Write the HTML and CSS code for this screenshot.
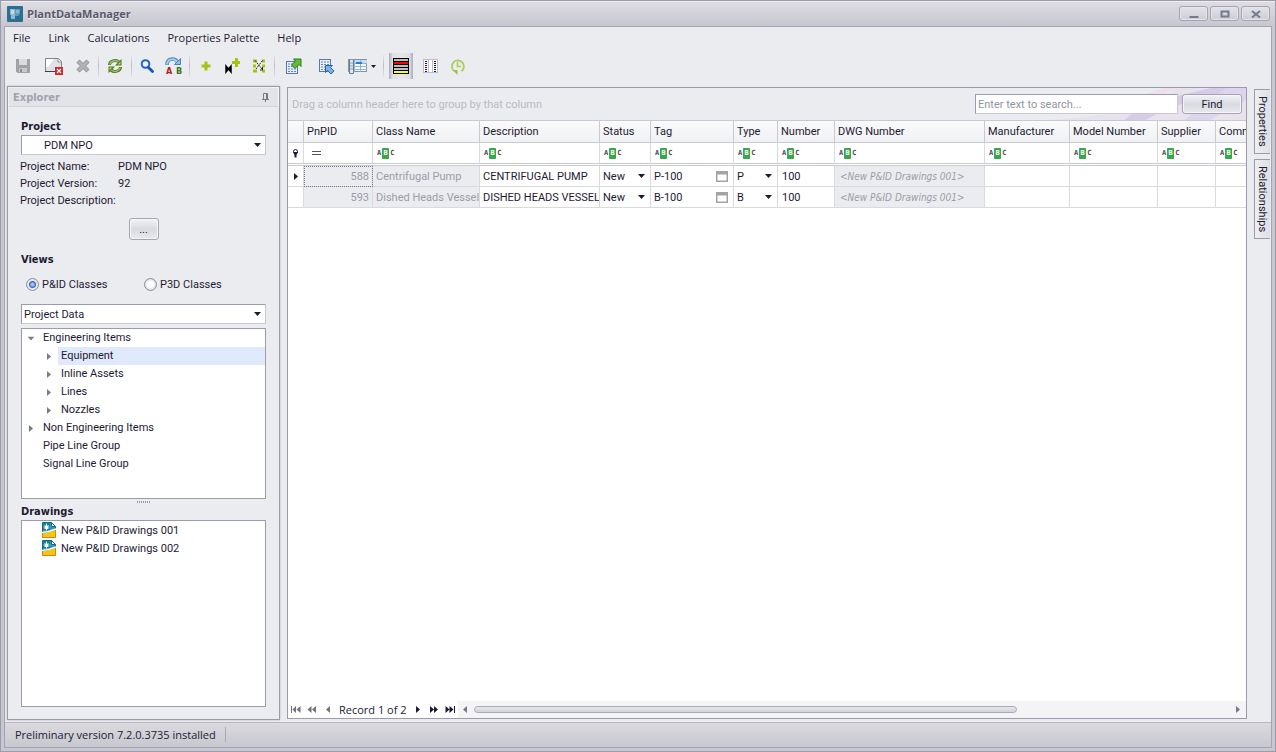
FILE: index.html
```html
<!DOCTYPE html>
<html lang="en">
<head>
<meta charset="utf-8">
<title>PlantDataManager</title>
<link rel="stylesheet" href="styles.css">
</head>
<body>
<svg class="defs" aria-hidden="true">
  <symbol id="i-right" viewBox="0 0 4 7"><path d="M0 0L4 3.500L0 7z" fill="currentColor"/></symbol>
  <symbol id="i-win" viewBox="0 0 12 11"><rect x=".75" y=".75" width="10.500" height="9.500" fill="#fff" stroke="#a3a3a8" stroke-width="1.500"/><rect width="12" height="3.500" fill="#a3a3a8"/></symbol>
  <symbol id="i-dwg" viewBox="0 0 14 16"><path d="M1 1h8l4 4V15H1z" fill="#2b9ad0"/><path d="M1 1h7v7H1z" fill="#1a7f95"/><path d="M9.500 1v4H13.500z" fill="#e8f6fa"/><path d="M.5 12V.5H9.500L13.500 4.500V7M9.500 .5V4.500H13.500" fill="none" stroke="#126a78"/><path d="M4.500 1.500v7M1.500 5h6M2.500 3l4 4M6.500 3l-4 4" stroke="#d8f4fa"/><path d="M3 4h3v3H3z" fill="#fff"/><path d="M0 11Q7 11 14 7V16H0z" fill="#f6c21c"/><path d="M0 10.500Q7 10 14 7" fill="none" stroke="#fffbe0" stroke-width="1.500"/><path d="M.5 11V15.500H13.500V8" fill="none" stroke="#c88d08"/></symbol>
</svg>
<div class="window">
  <header class="titlebar">
    <svg class="app-icon" viewBox="0 0 16 16"><rect width="16" height="16" rx="1" fill="#2d6f93"/><path d="M3 3h5v10H4V9H3z" fill="#8fb9cc"/><path d="M4 4h3v4H4z" fill="#c3d9e4"/><path d="M8 3h5v5l-2 2H8z" fill="#5f9ab9"/><path d="M9 4h3v3H9z" fill="#8db9cd"/></svg>
    <h1>PlantDataManager</h1>
    <div class="window-buttons">
      <button aria-label="Minimize"><svg viewBox="0 0 12 10"><path d="M1.500 8h9" stroke="#747a8c" stroke-width="2"/></svg></button>
      <button aria-label="Maximize"><svg viewBox="0 0 12 10"><path d="M2.500 2.500h7v5h-7z" fill="none" stroke="#747a8c" stroke-width="2"/></svg></button>
      <button aria-label="Close"><svg viewBox="0 0 12 10"><path d="M2 2l8 6.500M10 2l-8 6.500" stroke="#747a8c" stroke-width="2"/></svg></button>
    </div>
  </header>
  <div class="client">
    <nav class="menu" aria-label="Main menu">
      <button>File</button><button>Link</button><button>Calculations</button><button>Properties Palette</button><button>Help</button>
    </nav>
    <div class="toolbar" role="toolbar" aria-label="Tools">
      <button class="w28" aria-label="Save"><svg width="16" height="16" viewBox="0 0 16 16"><path d="M1 1h14v14H2.500L1 13.500z" fill="#a2a2a4"/><path d="M4 1h8v6H4z" fill="#dcdcde"/><path d="M4 10h8v4H4z" fill="#c9c9cb"/><path d="M5 11h2v3H5z" fill="#8d8d90"/></svg></button>
      <button class="w28" aria-label="Discard changes"><svg width="20" height="18" viewBox="0 0 20 18"><path d="M1.500 1.500h13l3 3V14.500h-16z" fill="#dfe1e6" stroke="#7f8389"/><path d="M1 14.500h17" stroke="#3c4045"/><path d="M2 2h8L4 10H2z" fill="#fff"/><path d="M14 1.500v3.500h3.500" fill="#fff" stroke="#8b8f95"/><rect x="11" y="10" width="8" height="8" fill="#d02a2a"/><path d="M13 12l4 4M17 12l-4 4" stroke="#fff" stroke-width="1.200"/></svg></button>
      <button aria-label="Delete"><svg width="14" height="14" viewBox="0 0 14 14"><path d="M2 2l10 10M12 2L2 12" stroke="#929397" stroke-width="4.500"/><path d="M2.500 2.500l9 9M11.500 2.500l-9 9" stroke="#b1b2b5" stroke-width="3"/></svg></button>
      <span class="sep"></span>
      <button class="w26" aria-label="Refresh"><svg width="16" height="16" viewBox="0 0 16 16"><path d="M2.500 7A5.500 4.500 0 0 1 12 4M13.500 9A5.500 4.500 0 0 1 4 12" fill="none" stroke="#4f7720" stroke-width="3"/><path d="M2.700 6.500A5.500 4.500 0 0 1 12 4M13.300 9.500A5.500 4.500 0 0 1 4 12" fill="none" stroke="#a5c86f" stroke-width="1.200"/><path d="M14.500 1v6.500H8z M1.500 15V8.500H8z" fill="#4f7720"/><path d="M13.500 3.500v3h-3z M2.500 12.500v-3h3z" fill="#b4d47e"/></svg></button>
      <span class="sep"></span>
      <button aria-label="Search"><svg width="14" height="14" viewBox="0 0 14 14"><circle cx="5.500" cy="5" r="3.800" fill="#edf5fd" stroke="#2361cb" stroke-width="2"/><path d="M8.500 8.500l4 4" stroke="#1752b8" stroke-width="2.800" stroke-linecap="round"/></svg></button>
      <button aria-label="Replace"><svg width="18" height="18" viewBox="0 0 18 18"><path d="M2 8Q2 2 7.500 2Q11 2 12.500 5" fill="none" stroke="#4a83b6" stroke-width="3.500"/><path d="M2 7.500Q2.500 2.200 7.500 2.200Q11 2.200 13 5.500" fill="none" stroke="#9fcdee" stroke-width="2"/><path d="M15.500 1.500V7.500H9.500z" fill="#8cc0e8" stroke="#4a83b6"/><text x="1" y="17" class="ic-a">A</text><text x="11" y="17" class="ic-b">B</text></svg></button>
      <span class="sep"></span>
      <button aria-label="Add"><svg width="12" height="12" viewBox="0 0 12 12"><path d="M5.500 1.500h3v3h3v3h-3v3h-3v-3h-3v-3h3z" fill="#a2c511"/></svg></button>
      <button aria-label="Add valve"><svg width="16" height="16" viewBox="0 0 16 16"><path d="M11 0h3v3h2v3h-2v3h-3V6H8V3h3z" fill="#a2c511"/><path d="M2 8l5 6V8l-5 6z" fill="#000" stroke="#000" stroke-width="1.500"/></svg></button>
      <button aria-label="Shuffle lines"><svg width="14" height="14" viewBox="0 0 14 14"><path d="M1 2h4M1 7h3M1 12h4M10 2h3M10 7h3M10 12h3" stroke="#a2c511" stroke-width="3"/><path d="M3 1.500L10 10M10.500 1.500L4 10" fill="none" stroke="#222" stroke-dasharray="2 1"/><path d="M8 11h2.500v-3" fill="none" stroke="#222"/></svg></button>
      <span class="sep"></span>
      <button class="w30" aria-label="Export"><svg width="17" height="17" viewBox="0 0 17 17"><rect x="1.500" y="3.500" width="11" height="12" fill="#e6effb" stroke="#5b78ad"/><path d="M3 6h8M3 8.500h8M3 11h8M3 13.500h8" stroke="#6385bf" stroke-dasharray="2 1"/><path d="M8.500 1h7.500v7.500l-2-2-4 4-3.500-3.500 4-4z" fill="#67b936" stroke="#2c7b16"/></svg></button>
      <button class="w30" aria-label="Import"><svg width="17" height="17" viewBox="0 0 17 17"><rect x="1.500" y="1.500" width="11" height="12" fill="#e6effb" stroke="#5b78ad"/><path d="M3 4h8M3 6.500h8M3 9h8M3 11.500h8" stroke="#6385bf" stroke-dasharray="2 1"/><path d="M7.500 7.500h7l-2 2 3.500 3.500-3 3-3.500-3.500-2 2z" fill="#78b2e9" stroke="#2a62ad"/></svg></button>
      <button class="w36" aria-label="Layouts"><svg width="20" height="16" viewBox="0 0 20 16"><rect x=".5" y="1.500" width="18" height="12" fill="#f3f8fd" stroke="#7d95a8"/><path d="M1 2h18v3H1z" fill="#c5dcf0"/><path d="M1 5.500h18M1 8.500h18M1 11.500h18M6.500 2v12M12.500 2v12" stroke="#9db4c6"/><path d="M8 5h6" stroke="#2480cf" stroke-width="2"/><path d="M1.500 2v13.500h4V2" fill="#d8e7f4" stroke="#667f93"/><path d="M2 5h3M2 8h3M2 11h3" stroke="#8aa6bd"/></svg><svg width="5" height="3" viewBox="0 0 5 3"><path d="M0 0h5L2.500 3z" fill="#1e1a33"/></svg></button>
      <span class="sep"></span>
      <button class="w28 pressed" aria-label="Row colours" aria-pressed="true"><svg width="16" height="16" viewBox="0 0 16 16" shape-rendering="crispEdges"><path d="M0 0h16v16H0z"/><path d="M1 1h14v2H1z M1 7h14v2H1z" fill="#bdbcc4"/><path d="M1 4h14v2H1z" fill="#f00"/><path d="M1 10h14v2H1z" fill="#bdbcc4"/><path d="M1 13h14v2H1z" fill="#ff0"/></svg></button>
      <button aria-label="Column colours"><svg width="15" height="14" viewBox="0 0 15 14" shape-rendering="crispEdges"><path d="M0 0h15v14H0z" fill="#bdbdc0"/><path d="M1 1h4v12H1zM6 1h3v12H6zM10 1h4v12h-4z" fill="#fff"/><path d="M3 2v11M12 2v11" stroke="#00f" stroke-width="2" stroke-dasharray="1 1"/></svg></button>
      <button class="w26" aria-label="History"><svg width="16" height="17" viewBox="0 0 16 17"><path d="M4 13A6 6 0 1 1 11.500 13.300" fill="none" stroke="#a9cf5a" stroke-width="1.800"/><path d="M7.500 4v4.500H11" fill="none" stroke="#a9cf5a" stroke-width="1.500"/><path d="M3 12h4.500v5z" fill="#96c33c"/></svg></button>
    </div>
    <div class="workspace">
      <aside class="explorer">
        <h2>Explorer<svg width="9" height="9" viewBox="0 0 9 9"><path d="M2.500 6V.5h4V6M1 6.500h7M4.500 7v2M5.500 1v5" fill="none" stroke="#777785"/></svg></h2>
        <div class="explorer-body">
          <label class="caption" for="project">Project</label>
          <div class="combo indent"><select id="project"><option>PDM NPO</option></select></div>
          <dl>
            <dt>Project Name:</dt><dd>PDM NPO</dd>
            <dt>Project Version:</dt><dd>92</dd>
            <dt>Project Description:</dt><dd></dd>
          </dl>
          <button class="push more" aria-label="More project details">...</button>
          <h3 class="caption">Views</h3>
          <div class="radios">
            <label><input type="radio" name="classes" checked>P&amp;ID Classes</label>
            <label><input type="radio" name="classes">P3D Classes</label>
          </div>
          <div class="combo"><select aria-label="View"><option>Project Data</option></select></div>
          <ul class="box tree" role="tree">
            <li role="treeitem"><svg class="down" viewBox="0 0 4 7"><use href="#i-right"/></svg><span>Engineering Items</span></li>
            <li role="treeitem" class="child selected"><svg viewBox="0 0 4 7"><use href="#i-right"/></svg><span>Equipment</span></li>
            <li role="treeitem" class="child"><svg viewBox="0 0 4 7"><use href="#i-right"/></svg><span>Inline Assets</span></li>
            <li role="treeitem" class="child"><svg viewBox="0 0 4 7"><use href="#i-right"/></svg><span>Lines</span></li>
            <li role="treeitem" class="child"><svg viewBox="0 0 4 7"><use href="#i-right"/></svg><span>Nozzles</span></li>
            <li role="treeitem"><svg viewBox="0 0 4 7"><use href="#i-right"/></svg><span>Non Engineering Items</span></li>
            <li role="treeitem" class="leaf"><span>Pipe Line Group</span></li>
            <li role="treeitem" class="leaf"><span>Signal Line Group</span></li>
          </ul>
          <div class="splitter"></div>
          <h3 class="caption">Drawings</h3>
          <ul class="box drawings">
            <li><svg viewBox="0 0 14 16"><use href="#i-dwg"/></svg>New P&amp;ID Drawings 001</li>
            <li><svg viewBox="0 0 14 16"><use href="#i-dwg"/></svg>New P&amp;ID Drawings 002</li>
          </ul>
        </div>
      </aside>
      <main class="grid">
        <div class="group-panel">
          <svg class="swirl" viewBox="0 0 200 32" preserveAspectRatio="none" aria-hidden="true"><path d="M0 32Q90 28 132 0H200V32z" fill="#e8e0ef"/><path d="M78 32Q100 14 140 6L165 0H200L150 12Q118 20 100 32z" fill="#d2c4ea"/><path d="M138 32L180 0H200V12L164 32z" fill="#dccfed"/><path d="M100 6L118 0H132L80 22z" fill="#f0dcec"/></svg>
          <span class="hint">Drag a column header here to group by that column</span>
          <input class="search" type="search" aria-label="Search" placeholder="Enter text to search...">
          <button class="push find">Find</button>
        </div>
        <div class="table-wrap">
          <table>
            <colgroup><col class="c0"><col class="c1"><col class="c2"><col class="c3"><col class="c4"><col class="c5"><col class="c6"><col class="c7"><col class="c8"><col class="c9"><col class="c10"><col class="c11"><col class="c12"></colgroup>
            <thead>
              <tr><th></th><th>PnPID</th><th>Class Name</th><th>Description</th><th>Status</th><th>Tag</th><th>Type</th><th>Number</th><th>DWG Number</th><th>Manufacturer</th><th>Model Number</th><th>Supplier</th><th>Comments</th></tr>
              <tr class="filter">
                <td><svg width="7" height="9" viewBox="0 0 7 9"><circle cx="3.500" cy="2.500" r="2" fill="#fff" stroke="#1e1a33"/><path d="M1 3h5L4.500 6V8.500h-2V6z" fill="#1e1a33"/></svg></td>
                <td><svg class="eq" width="9" height="4" viewBox="0 0 9 4"><path d="M0 .5h9M0 3.500h9" stroke="#55555f"/></svg></td>
                <td><span class="abc">A<b>B</b>C</span></td><td><span class="abc">A<b>B</b>C</span></td><td><span class="abc">A<b>B</b>C</span></td><td><span class="abc">A<b>B</b>C</span></td><td><span class="abc">A<b>B</b>C</span></td><td><span class="abc">A<b>B</b>C</span></td><td><span class="abc">A<b>B</b>C</span></td><td><span class="abc">A<b>B</b>C</span></td><td><span class="abc">A<b>B</b>C</span></td><td><span class="abc">A<b>B</b>C</span></td><td><span class="abc">A<b>B</b>C</span></td>
              </tr>
            </thead>
            <tbody>
              <tr>
                <td class="mark"><svg width="4" height="7" viewBox="0 0 4 7"><use href="#i-right"/></svg></td>
                <td class="ro num focus">588</td><td class="ro">Centrifugal Pump</td><td>CENTRIFUGAL PUMP</td>
                <td><div class="combo cell"><select aria-label="Status"><option>New</option></select></div></td>
                <td><div class="tag">P-100<svg width="12" height="11" viewBox="0 0 12 11"><use href="#i-win"/></svg></div></td>
                <td><div class="combo cell"><select aria-label="Type"><option>P</option></select></div></td>
                <td class="val">100</td><td class="ro ref">&lt;New P&amp;ID Drawings 001&gt;</td><td></td><td></td><td></td><td></td>
              </tr>
              <tr>
                <td></td>
                <td class="ro num">593</td><td class="ro">Dished Heads Vessel</td><td>DISHED HEADS VESSEL</td>
                <td><div class="combo cell"><select aria-label="Status"><option>New</option></select></div></td>
                <td><div class="tag">B-100<svg width="12" height="11" viewBox="0 0 12 11"><use href="#i-win"/></svg></div></td>
                <td><div class="combo cell"><select aria-label="Type"><option>B</option></select></div></td>
                <td class="val">100</td><td class="ro ref">&lt;New P&amp;ID Drawings 001&gt;</td><td></td><td></td><td></td><td></td>
              </tr>
            </tbody>
          </table>
        </div>
        <div class="pager">
          <button class="dim" aria-label="First"><svg width="10" height="7" viewBox="0 0 10 7"><path d="M0 0h1v7H0zM5 0v7L1.500 3.500zM9.500 0v7L5.500 3.500z" fill="currentColor"/></svg></button>
          <button class="dim" aria-label="Previous page"><svg width="10" height="7" viewBox="0 0 10 7"><path d="M4.500 0v7L.5 3.500zM9 0v7L5 3.500z" fill="currentColor"/></svg></button>
          <button class="dim" aria-label="Previous"><svg width="4" height="7" viewBox="0 0 4 7"><path d="M4 0v7L0 3.500z" fill="currentColor"/></svg></button>
          <span class="record">Record 1 of 2</span>
          <button aria-label="Next"><svg width="4" height="7" viewBox="0 0 4 7"><use href="#i-right"/></svg></button>
          <button aria-label="Next page"><svg width="10" height="7" viewBox="0 0 10 7"><path d="M1 0v7L5 3.500zM5 0v7L9 3.500z" fill="currentColor"/></svg></button>
          <button aria-label="Last"><svg width="10" height="7" viewBox="0 0 10 7"><path d="M9 0h1v7H9zM.5 0v7L4.500 3.500zM4.500 0v7L8.500 3.500z" fill="currentColor"/></svg></button>
          <div class="scroll">
            <svg width="4" height="7" viewBox="0 0 4 7"><path d="M4 0v7L0 3.500z" fill="currentColor"/></svg>
            <div class="track"><div class="thumb"></div></div>
            <svg width="4" height="7" viewBox="0 0 4 7"><use href="#i-right"/></svg>
          </div>
        </div>
      </main>
      <div class="side-tabs"><button>Properties</button><button>Relationships</button></div>
    </div>
    <footer class="status"><span>Preliminary version 7.2.0.3735 installed</span></footer>
  </div>
</div>
</body>
</html>
```
FILE: styles.css
```css
:root {
  --ink: #1e1a33;
  --edge: #9c9bab;
  --face: #ebecef;
  --line: #c9c9d3;
  --cell-line: #d9d9e0;
  --small: 11px Roboto, "Noto Sans", sans-serif;
  --bold: bold 11px "DejaVu Sans Condensed", "Noto Sans", sans-serif;
  --menu: 11px "Open Sans", "Noto Sans", sans-serif;
}
* { box-sizing: border-box; }
body { margin: 0; font: var(--small); color: var(--ink); }
button, input, select { font: inherit; color: inherit; margin: 0; padding: 0; border: 0; background: none; }
h1, h2, h3, ul, dl, dd { margin: 0; padding: 0; font: inherit; list-style: none; }
svg { display: block; flex: none; }
.defs { position: absolute; width: 0; height: 0; }

.window { display: flex; flex-direction: column; height: 100vh; padding: 0 3px 3px; border: 1px solid var(--edge); background: #c8c7d0; }
.titlebar { display: flex; align-items: center; gap: 4px; height: 25px; flex: none; padding: 0 5px 0 6px; margin: 0 -3px; box-shadow: inset 0 1px #efeff3; background: linear-gradient(#dddde2, #c8c7d0); }
.app-icon { width: 16px; height: 16px; }
.titlebar h1 { flex: 1; font: bold 11px "Open Sans", "Noto Sans", sans-serif; color: #5a586c; text-shadow: 0 1px #ededf1; }
.window-buttons { display: flex; gap: 2px; }
.window-buttons button { display: grid; place-items: center; width: 29px; height: 15px; border: 1px solid #a5a5b1; border-radius: 3px; background: linear-gradient(#e2e2e7, #cdcdd5); box-shadow: inset 0 0 0 1px #e4e4e9; }
.window-buttons svg { width: 12px; height: 10px; }

.client { flex: 1; min-height: 0; display: flex; flex-direction: column; border: 1px solid #a4a3b1; background: var(--face); }
.menu { display: flex; gap: 18px; height: 23px; flex: none; padding: 0 0 2px 8px; font: var(--menu); align-items: center; }
.toolbar { display: flex; align-items: center; gap: 3px; height: 32px; flex: none; padding-left: 4px; }
.toolbar button { display: flex; align-items: center; justify-content: center; gap: 3px; width: 24px; height: 26px; }
.toolbar .w26 { width: 26px; }
.toolbar .w28 { width: 28px; }
.toolbar .w30 { width: 30px; }
.toolbar .w36 { width: 36px; }
.toolbar .pressed { background: linear-gradient(90deg, #a9abb8, #dfe0e5 15%, #e6e7eb 50%, #dfe0e5 85%, #a9abb8) center / 24px 100% no-repeat; }
.sep { width: 1px; height: 22px; background: linear-gradient(#e2e3e8, #bcbdc8, #e2e3e8); }
.ic-a, .ic-b { font: bold 9px "DejaVu Sans Condensed", sans-serif; fill: #b81a1a; }
.ic-b { fill: #3f7427; }

.workspace { flex: 1; min-height: 0; display: flex; gap: 7px; padding: 4px 1px 2px 2px; }
.explorer { width: 273px; flex: none; display: flex; flex-direction: column; border: 1px solid var(--edge); box-shadow: 0 0 2px #b8b8c2; }
.explorer h2 { display: flex; align-items: center; justify-content: space-between; height: 20px; flex: none; padding: 0 8px 0 4px; border: 1px solid #f3f3f6; border-bottom-color: #d4d4dc; font: var(--bold); color: #a2a2ae; background: #e3e4e8; }
.explorer-body { flex: 1; min-height: 0; display: flex; flex-direction: column; padding: 12px 13px; }
.caption { display: block; height: 16px; flex: none; font: var(--bold); line-height: 16px; }
.combo { position: relative; display: flex; height: 20px; flex: none; border: 1px solid var(--edge); border-right-color: var(--line); border-bottom-color: var(--line); background: #fff; }
.combo select { appearance: none; flex: 1; min-width: 0; padding-left: 2px; }
.combo.indent select { padding-left: 22px; }
.combo::after { content: ""; position: absolute; right: 4px; top: 7px; width: 7px; height: 4px; background: var(--ink); clip-path: polygon(0 0, 100% 0, 50% 100%); pointer-events: none; }
.combo.cell { border: 0; background: none; }
.combo.cell select { padding-left: 3px; }
.combo.cell::after { right: 5px; top: 8px; }
dl { display: grid; grid-template-columns: 98px 1fr; grid-auto-rows: 17px; line-height: 17px; margin-top: 3px; margin-left: -1px; white-space: nowrap; }
.push { border: 1px solid #a5a5b1; border-radius: 3px; background: linear-gradient(#f3f3f6, #d9dae0 50%, #e9eaee); box-shadow: inset 0 0 0 1px #f6f6f8; }
.more { width: 30px; height: 22px; flex: none; align-self: center; margin: 9px 0 12px; }
.radios { display: grid; grid-template-columns: 118px 1fr; height: 20px; flex: none; margin: 6px 0 10px; padding-left: 5px; }
.radios label { display: flex; align-items: center; gap: 3px; }
.radios input { appearance: none; width: 13px; height: 13px; border: 1px solid #8d8d9b; border-radius: 50%; background: radial-gradient(circle, #fff 3px, #e2e2e8 5px); }
.radios input:checked { background: radial-gradient(circle, #a9c4f5 1px, #4167c4 3px, #e6e6ec 4px); }
.box { border: 1px solid var(--edge); background: #fff; }
.tree { height: 171px; margin-top: 4px; flex: none; }
.tree li { display: flex; align-items: center; height: 18px; padding-left: 7px; }
.tree svg { width: 4px; height: 7px; margin-right: 7px; color: #7b7b87; }
.tree svg.down { transform: rotate(90deg); }
.tree span { flex: 1; line-height: 18px; padding-left: 3px; }
.tree .child { padding-left: 25px; }
.tree .leaf { padding-left: 18px; }
.tree .selected span { background: #e1e9fc; }
.splitter { width: 13px; height: 2px; flex: none; align-self: center; margin: 2px 0 1px; background: repeating-linear-gradient(90deg, #9a9aa6 0 1px, transparent 1px 2px); }
.drawings { flex: 1; min-height: 0; }
.drawings li { display: flex; align-items: center; gap: 5px; height: 18px; padding-left: 20px; }
.drawings svg { width: 14px; height: 16px; }

.grid { flex: 1; min-width: 0; display: flex; flex-direction: column; margin: 1px 0; border: 1px solid var(--edge); background: #fff; }
.group-panel { position: relative; display: flex; align-items: center; gap: 4px; height: 32px; flex: none; padding: 0 4px; background: var(--face); }
.swirl { position: absolute; right: 0; top: 0; width: 200px; height: 32px; opacity: .8; }
.hint { flex: 1; color: #b9bac3; }
.search { position: relative; width: 203px; height: 20px; padding: 0 2px; border: 1px solid var(--edge); border-right-color: var(--line); border-bottom-color: var(--line); background: #fff; }
.search::placeholder { color: #9495a1; opacity: 1; }
.find { position: relative; width: 60px; height: 20px; }
.table-wrap { flex: 1; min-height: 0; overflow: hidden; }
table { table-layout: fixed; width: 998px; border-collapse: separate; border-spacing: 0; }
.c0 { width: 16px; } .c1 { width: 69px; } .c2 { width: 107px; } .c3 { width: 120px; } .c4 { width: 51px; }
.c5 { width: 83px; } .c6 { width: 44px; } .c7 { width: 57px; } .c8 { width: 150px; } .c9 { width: 85px; }
.c10 { width: 88px; } .c11 { width: 58px; } .c12 { width: 70px; }
th, td { padding: 0 3px; text-align: left; font-weight: normal; white-space: nowrap; overflow: hidden; }
th { height: 23px; border: solid var(--line); border-width: 1px 1px 1px 0; background: linear-gradient(#fafafb, #f0f1f3); }
tbody td { height: 21px; border: solid var(--cell-line); border-width: 0 1px 1px 0; }
.filter td { height: 23px; padding: 0 4px; border-right: 1px solid var(--cell-line); border-bottom: 3px double var(--line); }
.filter .eq { margin-left: 4px; }
.abc { display: flex; align-items: center; gap: 1px; font: bold 7px/11px "DejaVu Sans Mono", monospace; color: #4a4a55; }
.abc b { width: 7px; text-align: center; color: #fff; background: #38a748; border-radius: 1px; }
td.ro { color: #9c9ca8; background: #ebecef; }
td.num { text-align: right; }
td.focus { outline: 1px dotted #77778a; outline-offset: -1px; }
td.ref { padding-left: 5px; font: italic 10px "DejaVu Sans Condensed", sans-serif; }
td.val { padding-left: 4px; }
td.mark { padding-left: 6px; }
tbody td:has(.combo) { padding: 0; }
.tag { display: flex; align-items: center; justify-content: space-between; padding-right: 2px; }
.pager { display: flex; align-items: center; height: 17px; flex: none; }
.pager button { display: grid; place-items: center; width: 16px; height: 17px; flex: none; }
.pager .dim { color: #73737d; }
.record { padding: 0 3px; font: var(--menu); white-space: nowrap; }
.scroll { flex: 1; min-width: 0; display: flex; align-items: center; gap: 7px; height: 17px; padding: 0 6px 0 5px; color: #777785; background: #f4f4f7; }
.track { flex: 1; }
.thumb { width: 72%; height: 7px; border: 1px solid #a9aab7; border-radius: 4px; background: linear-gradient(#e6e6eb, #d2d3da); }
.side-tabs { display: flex; flex-direction: column; gap: 5px; margin-top: 3px; width: 16px; flex: none; }
.side-tabs button { writing-mode: vertical-rl; height: 65px; width: 16px; border: 1px solid var(--edge); border-right: 0; background: linear-gradient(90deg, #eeeff2, #dfe0e5); }
.side-tabs button + button { height: 80px; }

.status { display: flex; align-items: center; height: 25px; flex: none; padding: 0 0 2px 10px; border-top: 1px solid #b9b8c5; font: var(--menu); background: linear-gradient(#dadade, #c7c7cf); }
.status span { padding-right: 9px; border-right: 1px solid #a9a9b5; }
```
